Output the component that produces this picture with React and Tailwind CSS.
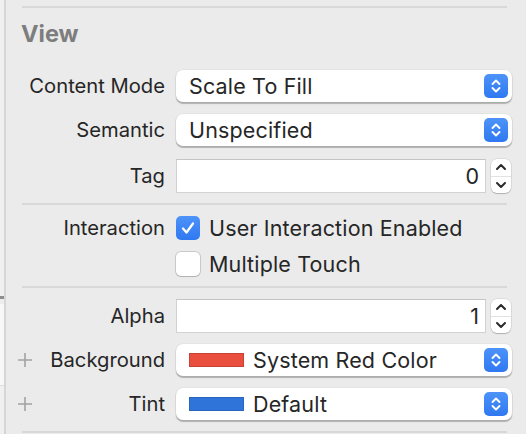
import React from "react";

const FONT = { fontFamily: "Inter, 'Liberation Sans', sans-serif" };

function BlueArrows() {
  return (
    <div className="w-[24px] h-[24px] rounded-[5px] bg-gradient-to-b from-[#4d93f9] to-[#2f78f1] flex items-center justify-center">
      <svg width="12" height="16" viewBox="0 0 12 16" fill="none">
        <path d="M2.5 6 L6 2.5 L9.5 6" stroke="white" strokeWidth="1.9" strokeLinecap="round" strokeLinejoin="round" />
        <path d="M2.5 10 L6 13.5 L9.5 10" stroke="white" strokeWidth="1.9" strokeLinecap="round" strokeLinejoin="round" />
      </svg>
    </div>
  );
}

function Popup({ text, swatch }) {
  return (
    <div className="w-[336px] h-[32px] bg-white rounded-[7px] shadow-[0_0.5px_0_1px_rgba(0,0,0,0.06),0_1.5px_1px_rgba(0,0,0,0.22)] flex items-center pl-[13px] pr-[4px]">
      {swatch && (
        <div className={`w-[55px] h-[14px] mr-[9px] border ${swatch}`} />
      )}
      <span className="flex-1 text-[21.5px] tracking-[0.15px] text-[#262626] leading-[32px]">{text}</span>
      <BlueArrows />
    </div>
  );
}

function Stepper() {
  return (
    <div className="w-[20px] h-[34px] bg-white rounded-[6px] shadow-[0_0_0_0.5px_rgba(0,0,0,0.12),0_1px_1px_rgba(0,0,0,0.2)] flex flex-col">
      <div className="flex-1 flex items-center justify-center border-b border-[#e2e2e2]">
        <svg width="12" height="8" viewBox="0 0 12 8" fill="none">
          <path d="M2 6 L6 2 L10 6" stroke="#2a2a2a" strokeWidth="2" strokeLinecap="round" strokeLinejoin="round" />
        </svg>
      </div>
      <div className="flex-1 flex items-center justify-center">
        <svg width="12" height="8" viewBox="0 0 12 8" fill="none">
          <path d="M2 2 L6 6 L10 2" stroke="#2a2a2a" strokeWidth="2" strokeLinecap="round" strokeLinejoin="round" />
        </svg>
      </div>
    </div>
  );
}

function NumberField({ value }) {
  return (
    <div className="flex items-center gap-[5px]">
      <div className="w-[310px] h-[34px] bg-white border border-[#d2d2d2] border-t-[#c4c4c4] flex items-center justify-end pr-[6px] text-[21.5px] text-[#262626]">
        {value}
      </div>
      <Stepper />
    </div>
  );
}

function Label({ text, plus }) {
  return (
    <div className={`w-[159px] flex items-center pl-[11px] ${plus ? "justify-between" : "justify-end"}`}>
      {plus && (
        <svg width="16" height="16" viewBox="0 0 16 16">
          <path d="M8 1 V15 M1 8 H15" stroke="#a3a3a3" strokeWidth="1.6" />
        </svg>
      )}
      <span className="text-[20.2px] text-[#262626] leading-[28px]">{text}</span>
    </div>
  );
}

function Row({ label, plus, children, className = "" }) {
  return (
    <div className={`flex items-center gap-[11px] ${className}`}>
      <Label text={label} plus={plus} />
      {children}
    </div>
  );
}

function Checkbox({ checked }) {
  if (checked) {
    return (
      <div className="w-[24px] h-[24px] rounded-[5px] bg-gradient-to-b from-[#4d93f9] to-[#2f78f1] flex items-center justify-center">
        <svg width="16" height="16" viewBox="0 0 16 16" fill="none">
          <path d="M3 8.5 L6.5 12.5 L13 3.5" stroke="white" strokeWidth="2.3" strokeLinecap="round" strokeLinejoin="round" />
        </svg>
      </div>
    );
  }
  return <div className="w-[24px] h-[24px] rounded-[5px] bg-white shadow-[0_0_0_1px_rgba(0,0,0,0.14),0_1px_1px_rgba(0,0,0,0.12)]" />;
}

function CheckRow({ label, text, checked, className = "" }) {
  return (
    <div className={`flex items-center gap-[11px] h-[24px] ${className}`}>
      <div className="w-[159px] flex justify-end">
        {label && <span className="text-[20.2px] text-[#262626] leading-[28px]">{label}</span>}
      </div>
      <div className="flex items-center gap-[9px]">
        <Checkbox checked={checked} />
        <span className="text-[21.5px] tracking-[0.15px] text-[#262626] leading-[28px]">{text}</span>
      </div>
    </div>
  );
}

function Sep({ className = "" }) {
  return <div className={`h-[2px] bg-[#d8d8d8] ml-[16px] mr-[19px] ${className}`} />;
}

export default function App() {
  return (
    <div className="w-[526px] h-[434px] flex overflow-hidden bg-[#ebebeb]" style={FONT}>
      <div className="w-[6px] flex flex-col border-r-[2px] border-[#d6d6d6]">
        <div className="h-[296px] bg-[#f0f0f0]" />
        <div className="h-[3px] bg-[#8e8e8e]" />
        <div className="h-[5px] bg-[#ededed]" />
        <div className="h-[81px] bg-[#f8f8f8]" />
        <div className="h-[1px] bg-[#dcdcdc]" />
        <div className="flex-1 bg-[#f0f0f0]" />
      </div>
      <div className="flex-1 flex flex-col pt-[6px]">
        <Sep />
        <div className="h-[52px] flex items-center pl-[15px]">
          <span className="text-[23.5px] font-bold text-[#7d7d7d] leading-none">View</span>
        </div>
        <Row label="Content Mode" className="mt-[10px]">
          <Popup text="Scale To Fill" />
        </Row>
        <Row label="Semantic" className="mt-[12px]">
          <Popup text="Unspecified" />
        </Row>
        <Row label="Tag" className="mt-[13px]">
          <NumberField value="0" />
        </Row>
        <Sep className="mt-[10px]" />
        <CheckRow label="Interaction" text="User Interaction Enabled" checked className="mt-[11px]" />
        <CheckRow text="Multiple Touch" className="mt-[12px]" />
        <Sep className="mt-[10px]" />
        <Row label="Alpha" className="mt-[11px]">
          <NumberField value="1" />
        </Row>
        <Row label="Background" plus className="mt-[11px]">
          <Popup text="System Red Color" swatch="bg-[#e94e3e] border-[#c94335]" />
        </Row>
        <Row label="Tint" plus className="mt-[12px]">
          <Popup text="Default" swatch="bg-[#2f74d9] border-[#2964bd]" />
        </Row>
        <Sep className="mt-[11px]" />
      </div>
    </div>
  );
}
